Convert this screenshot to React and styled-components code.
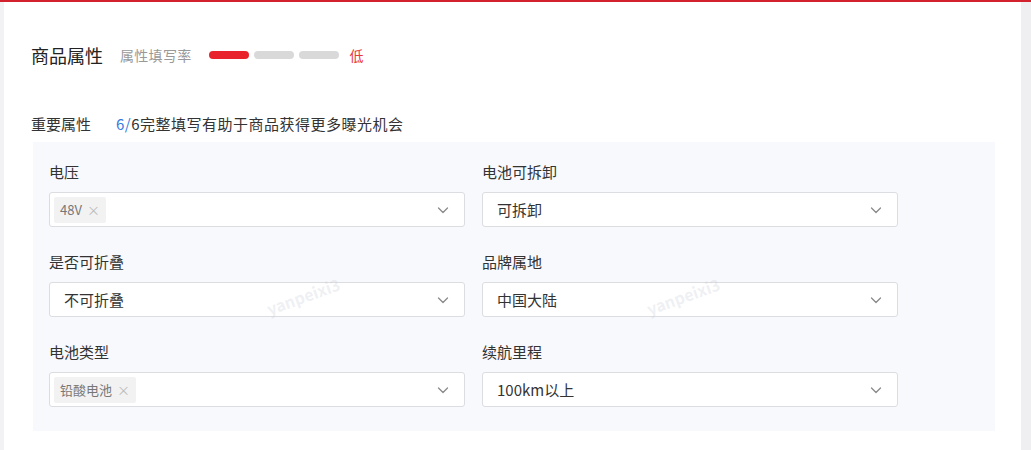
import React from 'react';
import styled, { createGlobalStyle } from 'styled-components';

const GlobalStyle = createGlobalStyle`
  html, body {
    margin: 0;
    padding: 0;
    background: #f2f2f4;
    font-family: 'Noto Sans CJK SC', 'Noto Sans', sans-serif;
  }
`;

const attrs = [
  { label: '电压', tag: '48V' },
  { label: '电池可拆卸', value: '可拆卸' },
  { label: '是否可折叠', value: '不可折叠' },
  { label: '品牌属地', value: '中国大陆' },
  { label: '电池类型', tag: '铅酸电池' },
  { label: '续航里程', value: '100km以上' },
];

function Chevron() {
  return (
    <svg width="14" height="14" viewBox="0 0 14 14" fill="none">
      <path d="M2.5 5l4.5 4.5L11.5 5" stroke="#8a8a8a" strokeWidth="1.3" strokeLinecap="round" strokeLinejoin="round" />
    </svg>
  );
}

function App() {
  return (
    <>
      <GlobalStyle />
      <StPage>
        <StTopLine />
        <StBody>
          <StCard>
            <StHeader>
              <StTitle>商品属性</StTitle>
              <StRateLabel>属性填写率</StRateLabel>
              <StBars>
                <StBar active />
                <StBar />
                <StBar />
              </StBars>
              <StLevel>低</StLevel>
            </StHeader>
            <StSubHeader>
              <StSubTitle>重要属性</StSubTitle>
              <StHint>
                <StBlue>6/</StBlue>6完整填写有助于商品获得更多曝光机会
              </StHint>
            </StSubHeader>
            <StPanel>
              <StWatermark style={{ left: 232, top: 142 }}>yanpeixi3</StWatermark>
              <StWatermark style={{ left: 612, top: 142 }}>yanpeixi3</StWatermark>
              <StGrid>
                {attrs.map((a) => (
                  <StField key={a.label}>
                    <StLabel>{a.label}</StLabel>
                    <StSelect>
                      {a.tag ? (
                        <StTag>
                          {a.tag}
                          <StTagClose>×</StTagClose>
                        </StTag>
                      ) : (
                        <StValue>{a.value}</StValue>
                      )}
                      <Chevron />
                    </StSelect>
                  </StField>
                ))}
              </StGrid>
            </StPanel>
          </StCard>
          <StSideStrip />
        </StBody>
      </StPage>
    </>
  );
}

const StPage = styled.div`
  width: 1031px;
  height: 450px;
  overflow: hidden;
  display: flex;
  flex-direction: column;
`;

const StTopLine = styled.div`
  height: 2px;
  background: #d3222e;
`;

const StBody = styled.div`
  flex: 1;
  display: flex;
  padding-left: 4px;
`;

const StCard = styled.div`
  width: 1017px;
  background: #ffffff;
  padding: 0 0 0 27px;
  box-sizing: border-box;
`;

const StSideStrip = styled.div`
  flex: 1;
  background: #efeff2;
`;

const StHeader = styled.div`
  display: flex;
  align-items: center;
  height: 30px;
  margin-top: 38px;
`;

const StTitle = styled.div`
  font-size: 18px;
  color: #222;
  margin-right: 17px;
`;

const StRateLabel = styled.div`
  font-size: 14px;
  letter-spacing: 0.3px;
  color: #999;
  margin-right: 17px;
`;

const StBars = styled.div`
  display: flex;
  gap: 5px;
  margin-right: 11px;
`;

const StBar = styled.div`
  width: 40px;
  height: 8px;
  border-radius: 4px;
  background: ${(p) => (p.active ? '#e8232b' : '#d9d9d9')};
`;

const StLevel = styled.div`
  font-size: 14px;
  color: #e8363d;
`;

const StSubHeader = styled.div`
  display: flex;
  align-items: center;
  height: 24px;
  margin-top: 41px;
`;

const StSubTitle = styled.div`
  font-size: 15px;
  color: #333;
  width: 85px;
`;

const StHint = styled.div`
  font-size: 15px;
  letter-spacing: 0.5px;
  color: #333;
`;

const StBlue = styled.span`
  color: #3a78e0;
`;

const StPanel = styled.div`
  position: relative;
  width: 962px;
  margin-top: 7px;
  margin-left: 2px;
  padding: 20px 16px 24px;
  box-sizing: border-box;
  background: #f8f9fc;
`;

const StWatermark = styled.div`
  position: absolute;
  font-size: 16px;
  font-weight: bold;
  color: rgba(200, 205, 215, 0.3);
  transform: rotate(-20deg);
  pointer-events: none;
`;

const StGrid = styled.div`
  display: grid;
  grid-template-columns: 416px 416px;
  column-gap: 17px;
  row-gap: 25px;
`;

const StField = styled.div`
  display: flex;
  flex-direction: column;
`;

const StLabel = styled.div`
  font-size: 15px;
  color: #333;
  line-height: 20px;
  margin-bottom: 10px;
`;

const StSelect = styled.div`
  height: 35px;
  box-sizing: border-box;
  border: 1px solid #dcdde0;
  border-radius: 3px;
  background: #fff;
  display: flex;
  align-items: center;
  justify-content: space-between;
  padding: 0 14px 0 4px;
`;

const StValue = styled.div`
  font-size: 15px;
  color: #333;
  padding-left: 10px;
`;

const StTag = styled.div`
  height: 26px;
  background: #f2f2f3;
  display: flex;
  align-items: center;
  padding: 0 6px;
  font-size: 13px;
  color: #777;
  border-radius: 2px;
`;

const StTagClose = styled.span`
  margin-left: 5px;
  color: #bbb;
  font-size: 13px;
`;

export default App;
